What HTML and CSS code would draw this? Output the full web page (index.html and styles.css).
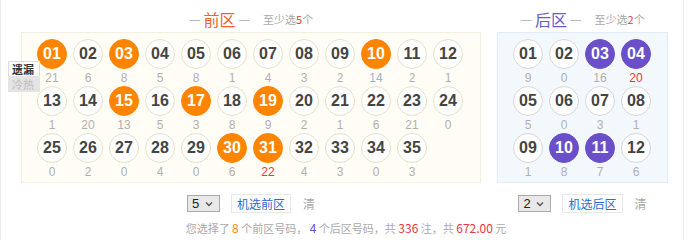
FILE: index.html
```html
<!DOCTYPE html>
<html lang="zh-CN">
<head>
<meta charset="utf-8">
<link rel="stylesheet" href="styles.css">
</head>
<body>
<div class="page">
  <div class="main">
    <section class="zone zone-front">
      <div class="head">
        <span class="dash">—</span><span class="title title-front">前区</span><span class="dash">—</span>
        <span class="hint">至少选<em class="hint-num">5</em>个</span>
      </div>
      <div class="box box-front">
        <div class="tabs">
          <span class="tab tab-on">遗漏</span>
          <span class="tab tab-off">冷热</span>
        </div>
        <div class="grid">
          <div class="cell"><span class="ball on">01</span><span class="miss">21</span></div>
          <div class="cell"><span class="ball">02</span><span class="miss">6</span></div>
          <div class="cell"><span class="ball on">03</span><span class="miss">8</span></div>
          <div class="cell"><span class="ball">04</span><span class="miss">5</span></div>
          <div class="cell"><span class="ball">05</span><span class="miss">8</span></div>
          <div class="cell"><span class="ball">06</span><span class="miss">1</span></div>
          <div class="cell"><span class="ball">07</span><span class="miss">4</span></div>
          <div class="cell"><span class="ball">08</span><span class="miss">3</span></div>
          <div class="cell"><span class="ball">09</span><span class="miss">2</span></div>
          <div class="cell"><span class="ball on">10</span><span class="miss miss-blue">14</span></div>
          <div class="cell"><span class="ball">11</span><span class="miss">2</span></div>
          <div class="cell"><span class="ball">12</span><span class="miss">1</span></div>

          <div class="cell"><span class="ball">13</span><span class="miss">1</span></div>
          <div class="cell"><span class="ball">14</span><span class="miss">20</span></div>
          <div class="cell"><span class="ball on">15</span><span class="miss">13</span></div>
          <div class="cell"><span class="ball">16</span><span class="miss">5</span></div>
          <div class="cell"><span class="ball on">17</span><span class="miss">3</span></div>
          <div class="cell"><span class="ball">18</span><span class="miss">8</span></div>
          <div class="cell"><span class="ball on">19</span><span class="miss">9</span></div>
          <div class="cell"><span class="ball">20</span><span class="miss">2</span></div>
          <div class="cell"><span class="ball">21</span><span class="miss">1</span></div>
          <div class="cell"><span class="ball">22</span><span class="miss">6</span></div>
          <div class="cell"><span class="ball">23</span><span class="miss">21</span></div>
          <div class="cell"><span class="ball">24</span><span class="miss">0</span></div>

          <div class="cell"><span class="ball">25</span><span class="miss">0</span></div>
          <div class="cell"><span class="ball">26</span><span class="miss">2</span></div>
          <div class="cell"><span class="ball">27</span><span class="miss">0</span></div>
          <div class="cell"><span class="ball">28</span><span class="miss">4</span></div>
          <div class="cell"><span class="ball">29</span><span class="miss">0</span></div>
          <div class="cell"><span class="ball on">30</span><span class="miss">6</span></div>
          <div class="cell"><span class="ball on">31</span><span class="miss miss-max">22</span></div>
          <div class="cell"><span class="ball">32</span><span class="miss">4</span></div>
          <div class="cell"><span class="ball">33</span><span class="miss">3</span></div>
          <div class="cell"><span class="ball">34</span><span class="miss">0</span></div>
          <div class="cell"><span class="ball">35</span><span class="miss">3</span></div>
        </div>
      </div>
      <div class="controls">
        <span class="sel">5<svg class="chev" width="8" height="6" viewBox="0 0 8 6"><path d="M1 1.5 L4 4.5 L7 1.5" fill="none" stroke="#555" stroke-width="1.4"/></svg></span>
        <span class="btn">机选前区</span>
        <span class="clear">清</span>
      </div>
    </section>

    <section class="zone zone-back">
      <div class="head">
        <span class="dash">—</span><span class="title title-back">后区</span><span class="dash">—</span>
        <span class="hint">至少选<em class="hint-num">2</em>个</span>
      </div>
      <div class="box box-back">
        <div class="grid">
          <div class="cell"><span class="ball">01</span><span class="miss">9</span></div>
          <div class="cell"><span class="ball">02</span><span class="miss">0</span></div>
          <div class="cell"><span class="ball on">03</span><span class="miss">16</span></div>
          <div class="cell"><span class="ball on">04</span><span class="miss miss-max">20</span></div>

          <div class="cell"><span class="ball">05</span><span class="miss">5</span></div>
          <div class="cell"><span class="ball">06</span><span class="miss">0</span></div>
          <div class="cell"><span class="ball">07</span><span class="miss">3</span></div>
          <div class="cell"><span class="ball">08</span><span class="miss">1</span></div>

          <div class="cell"><span class="ball">09</span><span class="miss">1</span></div>
          <div class="cell"><span class="ball on">10</span><span class="miss">8</span></div>
          <div class="cell"><span class="ball on">11</span><span class="miss">7</span></div>
          <div class="cell"><span class="ball">12</span><span class="miss">6</span></div>
        </div>
      </div>
      <div class="controls">
        <span class="sel">2<svg class="chev" width="8" height="6" viewBox="0 0 8 6"><path d="M1 1.5 L4 4.5 L7 1.5" fill="none" stroke="#555" stroke-width="1.4"/></svg></span>
        <span class="btn">机选后区</span>
        <span class="clear">清</span>
      </div>
    </section>
  </div>
  <div class="summary">您选择了 <b class="s-front">8</b> 个前区号码， <b class="s-back">4</b> 个后区号码，共 <b class="s-red">336</b> 注，共 <b class="s-red">672.00</b> 元</div>
</div>
</body>
</html>
```
FILE: styles.css
```css
* { box-sizing: border-box; }
html, body { margin: 0; padding: 0; background: #fff; }
body {
  font-family: "Liberation Sans", "Noto Sans CJK SC", sans-serif;
  color: #333;
}
.page {
  width: 684px;
  height: 240px;
  border-left: 1px solid #ececec;
  border-right: 1px solid #ececec;
  overflow: hidden;
}
.main {
  display: flex;
  gap: 16px;
  padding-left: 20px;
}
.zone { display: flex; flex-direction: column; align-items: center; position: relative; }
.zone-front { width: 460px; }
.zone-back { width: 171px; }

.head {
  height: 32px;
  padding-top: 5px;
  display: flex;
  align-items: center;
  font-family: "Noto Sans CJK SC", sans-serif;
}
.head > * { line-height: 24px; }
.dash { color: #aaa; font-size: 13px; }
.title { font-size: 16px; margin: 0 3px; }
.title-front { color: #f0642a; }
.title-back { color: #6a5acd; }
.hint { color: #aaa; font-size: 11px; margin-left: 13px; }
.hint-num { font-style: normal; color: #e4393c; }

.box {
  position: relative;
  width: 100%;
  padding: 6px 0 2px 12px;
  border: 1px solid;
}
.box-front { background: #fffdf6; border-color: #f4efdf; }
.box-back { background: #f3f8fd; border-color: #e2ecf6; }

.grid { display: flex; flex-wrap: wrap; }
.box-front .grid { width: 432px; }
.box-back .grid { width: 144px; }
.cell {
  width: 36px;
  display: flex;
  flex-direction: column;
  align-items: center;
}
.ball {
  width: 30px;
  height: 30px;
  border-radius: 50%;
  background: #fff;
  border: 1px solid #e6e0c8;
  display: flex;
  align-items: center;
  justify-content: center;
  font-weight: bold;
  font-size: 16px;
  color: #444;
}
.box-back .ball { border-color: #d6d6d6; }
.box-front .ball.on { background: #ff8400; border-color: #ff8400; color: #fff; }
.box-back .ball.on { background: #6a4fc9; border-color: #6a4fc9; color: #fff; }
.miss {
  height: 17px;
  line-height: 19px;
  font-size: 12px;
  color: #b0b0b0;
}
.miss-max { color: #e4393c; }
.miss-blue { color: #98b4cc; }

.tabs {
  position: absolute;
  left: -14px;
  top: 28px;
  display: flex;
  flex-direction: column;
  font-family: "Noto Sans CJK SC", sans-serif;
  font-size: 11px;
  line-height: 14px;
}
.tab { width: 32px; padding-left: 3px; }
.tab-on {
  background: #fff;
  color: #333;
  font-weight: bold;
  border: 1px solid #ddd;
  border-bottom: none;
}
.tab-off { background: #e4e4e4; color: #bbb; border: 1px solid #e4e4e4; }

.controls {
  display: flex;
  align-items: center;
  margin-top: 11px;
  height: 19px;
  font-family: "Noto Sans CJK SC", sans-serif;
}
.sel {
  width: 33px;
  height: 17px;
  background: #e8e8e8;
  border: 1px solid #aaa;
  font-family: "Liberation Sans", sans-serif;
  font-size: 13px;
  color: #222;
  display: flex;
  align-items: center;
  justify-content: space-between;
  padding: 0 6px 0 4px;
}
.btn {
  margin-left: 11px;
  height: 19px;
  line-height: 17px;
  padding: 0 5px;
  border: 1px solid #e8e8e8;
  background: #fff;
  color: #2a6ec8;
  font-size: 12px;
}
.clear { margin-left: 12px; color: #aaa; font-size: 12px; }

.summary {
  margin-top: 6px;
  text-align: center;
  font-family: "Noto Sans CJK SC", sans-serif;
  font-size: 11px;
  color: #aaa;
  line-height: 18px;
  padding-left: 8px;
}
.summary b { font-weight: normal; font-size: 12px; }
.s-front { color: #ff8400; }
.s-back { color: #6a4fc9; }
.s-red { color: #e4393c; }
```
